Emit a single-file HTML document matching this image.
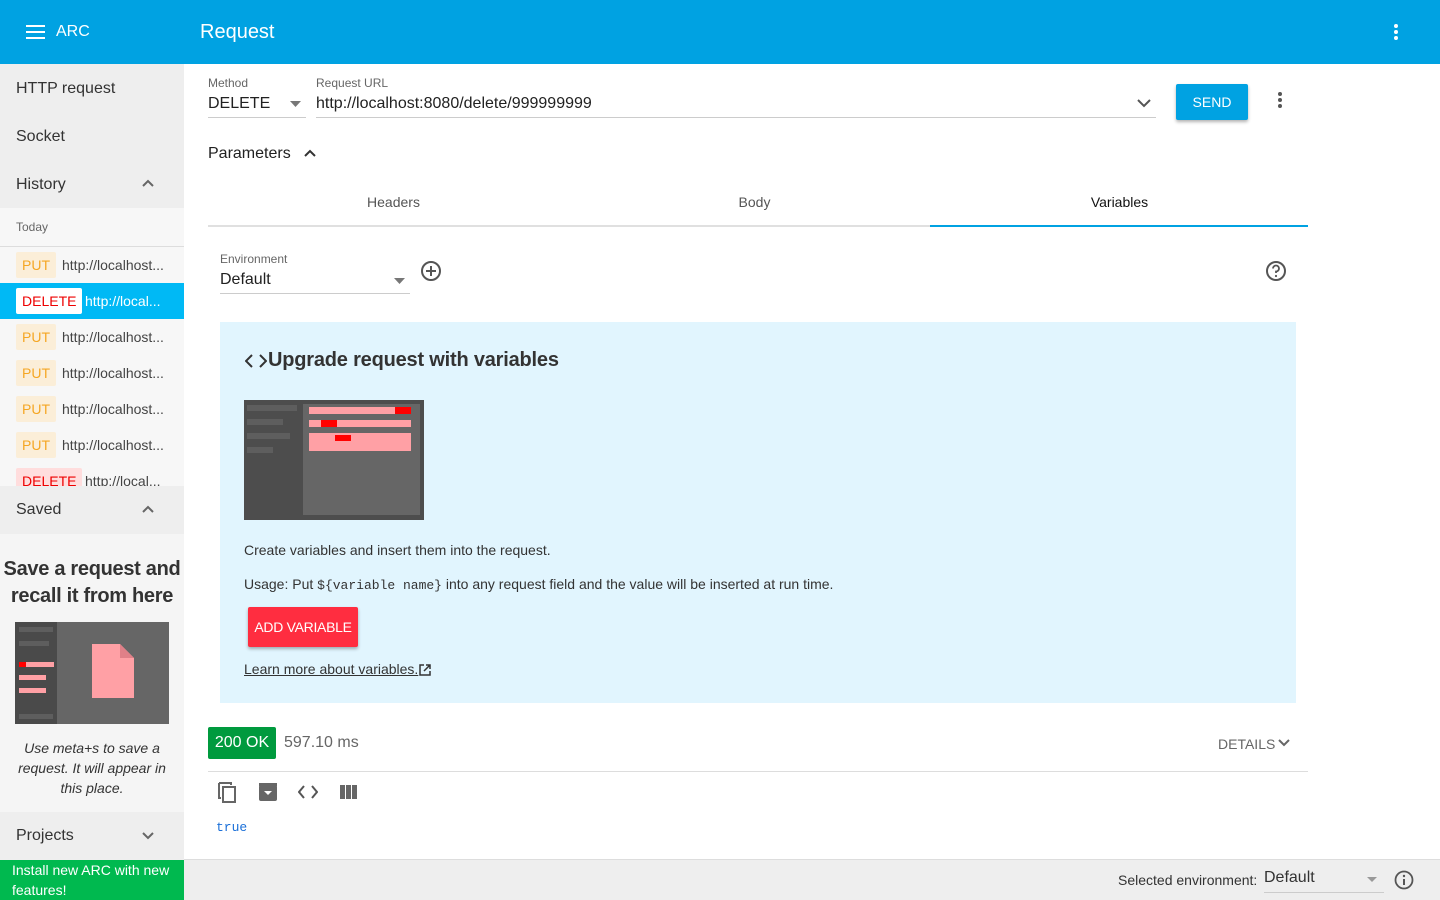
<!DOCTYPE html>
<html><head><meta charset="utf-8"><style>
*{box-sizing:border-box;margin:0;padding:0}
html,body{width:1440px;height:900px;overflow:hidden}
body{font-family:"Liberation Sans",sans-serif;color:#212121;background:#fff;position:relative}
.abs{position:absolute}
.top{left:0;top:0;width:1440px;height:64px;background:#00a2e2;color:#fff}
.side{left:0;top:64px;width:184px;height:836px;background:#f5f5f5;overflow:hidden}
.sh{height:48px;background:#eee;font-size:16px;color:#333;padding-left:16px;line-height:48px;position:relative}
.item{position:absolute;left:0;width:184px;height:36px}
.tag{position:absolute;left:16px;top:5px;height:26px;line-height:26px;padding:0 6px;border-radius:2px;font-size:14px}
.put{background:#fbeed8;color:#f5a623}
.del{background:#fdd;color:#e00}
.url{position:absolute;top:0;line-height:36px;font-size:14px;color:#444}
.lbl{font-size:12px;color:#666}
.tab{position:absolute;top:190px;font-size:14px;color:#555;width:361px;text-align:center;line-height:24px}
</style></head><body>
<div class="abs top">
<svg class="abs" style="left:26px;top:24px" width="20" height="16"><rect y="1" width="19" height="2" fill="#fff"/><rect y="7" width="19" height="2" fill="#fff"/><rect y="13" width="19" height="2" fill="#fff"/></svg>
<div class="abs" style="left:56px;top:23px;font-size:16px">ARC</div>
<div class="abs" style="left:200px;top:21px;font-size:20px">Request</div>
<svg class="abs" style="left:1392px;top:24px" width="8" height="18"><circle cx="4" cy="2" r="2" fill="#fff"/><circle cx="4" cy="8" r="2" fill="#fff"/><circle cx="4" cy="14" r="2" fill="#fff"/></svg>
</div>
<div class="abs side">
<div class="sh" style="line-height:49px">HTTP request</div>
<div class="sh" style="line-height:49px">Socket</div>
<div class="sh" style="line-height:49px">History<svg class="abs" style="left:142px;top:19px" width="12" height="8"><path d="M1 7L6 2L11 7" stroke="#666" stroke-width="2" fill="none"/></svg></div>
<div style="position:relative;height:278px;background:#f7f7f7;overflow:hidden">
<div class="abs" style="left:16px;top:12px;font-size:12px;color:#666">Today</div>
<div class="abs" style="left:0;top:38px;width:184px;height:1px;background:#ddd"></div>
<div class="item" style="top:39px"><span class="tag put">PUT</span><span class="url" style="left:62px">http://localhost...</span></div>
<div class="item" style="top:75px;background:#00b9f5"><span class="tag" style="background:#fff;color:#e00">DELETE</span><span class="url" style="left:85px;color:#fff">http://local...</span></div>
<div class="item" style="top:111px"><span class="tag put">PUT</span><span class="url" style="left:62px">http://localhost...</span></div>
<div class="item" style="top:147px"><span class="tag put">PUT</span><span class="url" style="left:62px">http://localhost...</span></div>
<div class="item" style="top:183px"><span class="tag put">PUT</span><span class="url" style="left:62px">http://localhost...</span></div>
<div class="item" style="top:219px"><span class="tag put">PUT</span><span class="url" style="left:62px">http://localhost...</span></div>
<div class="item" style="top:255px"><span class="tag del">DELETE</span><span class="url" style="left:85px">http://local...</span></div>
</div>
<div class="sh">Saved<svg class="abs" style="left:142px;top:19px" width="12" height="8"><path d="M1 7L6 2L11 7" stroke="#666" stroke-width="2" fill="none"/></svg></div>
<div class="abs" style="left:0;top:492px;width:184px;text-align:center;font-size:20px;line-height:27px;color:#333;font-weight:bold;letter-spacing:-0.3px">Save a request and recall it from here</div>
<svg class="abs" style="left:15px;top:558px" width="154" height="102"><rect width="154" height="102" fill="#666"/><rect width="42" height="102" fill="#4a4a4a"/><rect x="4" y="5" width="34" height="5" fill="#5e5e5e"/><rect x="4" y="19" width="30" height="5" fill="#5e5e5e"/><rect x="4" y="40" width="35" height="5" fill="#ffa0a5"/><rect x="4" y="40" width="7" height="5" fill="#f00"/><rect x="4" y="53" width="27" height="5" fill="#ffa0a5"/><rect x="4" y="66" width="27" height="5" fill="#ffa0a5"/><rect x="4" y="92" width="34" height="5" fill="#5e5e5e"/><path d="M77 22H105L119 36V76H77Z" fill="#ffa0a5"/><path d="M105 22L119 36H105Z" fill="#e08088"/></svg>
<div class="abs" style="left:10px;top:674px;width:164px;text-align:center;font-size:14px;line-height:20px;font-style:italic;color:#333">Use meta+s to save a request. It will appear in this place.</div>
<div class="sh" style="position:absolute;left:0;top:748px;width:184px">Projects<svg class="abs" style="left:142px;top:20px" width="12" height="8"><path d="M1 1L6 6L11 1" stroke="#666" stroke-width="2" fill="none"/></svg></div>
<div class="abs" style="left:0;top:796px;width:184px;height:40px;background:#00b94f;color:#fff;font-size:14px;line-height:20px;padding-left:12px">Install new ARC with new features!</div>
</div>

<div class="abs lbl" style="left:208px;top:76px">Method</div>
<div class="abs" style="left:208px;top:95px;font-size:16px">DELETE</div>
<svg class="abs" style="left:290px;top:101px" width="11" height="6"><path d="M0 0H11L5.5 6Z" fill="#777"/></svg>
<div class="abs" style="left:208px;top:117px;width:98px;height:1px;background:#ccc"></div>
<div class="abs lbl" style="left:316px;top:76px">Request URL</div>
<div class="abs" style="left:316px;top:95px;font-size:16px">http://localhost:8080/delete/999999999</div>
<svg class="abs" style="left:1137px;top:99px" width="14" height="9"><path d="M1 1L7 7L13 1" stroke="#555" stroke-width="2" fill="none"/></svg>
<div class="abs" style="left:316px;top:117px;width:840px;height:1px;background:#ccc"></div>
<div class="abs" style="left:1176px;top:84px;width:72px;height:36px;background:#00a2e2;color:#fff;font-size:14px;line-height:36px;text-align:center;border-radius:2px;box-shadow:0 2px 3px rgba(0,0,0,.3)">SEND</div>
<svg class="abs" style="left:1276px;top:92px" width="8" height="18"><circle cx="4" cy="2" r="2" fill="#555"/><circle cx="4" cy="8" r="2" fill="#555"/><circle cx="4" cy="14" r="2" fill="#555"/></svg>
<div class="abs" style="left:208px;top:145px;font-size:16px">Parameters</div>
<svg class="abs" style="left:304px;top:149px" width="12" height="8"><path d="M1 7L6 2L11 7" stroke="#333" stroke-width="2" fill="none"/></svg>
<div class="tab" style="left:213px">Headers</div>
<div class="tab" style="left:574px">Body</div>
<div class="tab" style="left:939px;color:#111">Variables</div>
<div class="abs" style="left:208px;top:225px;width:1100px;height:2px;background:#e0e0e0"></div>
<div class="abs" style="left:930px;top:225px;width:378px;height:2px;background:#00a2e2"></div>
<div class="abs lbl" style="left:220px;top:252px">Environment</div>
<div class="abs" style="left:220px;top:271px;font-size:16px">Default</div>
<svg class="abs" style="left:394px;top:278px" width="11" height="6"><path d="M0 0H11L5.5 6Z" fill="#777"/></svg>
<div class="abs" style="left:220px;top:293px;width:190px;height:1px;background:#ccc"></div>
<svg class="abs" style="left:420px;top:260px" width="22" height="22"><circle cx="11" cy="11" r="9" stroke="#555" stroke-width="2" fill="none"/><path d="M11 6V16M6 11H16" stroke="#555" stroke-width="2"/></svg>
<svg class="abs" style="left:1265px;top:260px" width="22" height="22"><circle cx="11" cy="11" r="9" stroke="#555" stroke-width="2" fill="none"/><path d="M8 8.5A3 3 0 1 1 11 11.5V13" stroke="#555" stroke-width="1.8" fill="none"/><circle cx="11" cy="16" r="1.1" fill="#555"/></svg>

<div class="abs" style="left:220px;top:322px;width:1076px;height:381px;background:#e1f5fe"></div>
<svg class="abs" style="left:245px;top:354px" width="22" height="14"><path d="M7 1L1 7L7 13M15 1L21 7L15 13" stroke="#333" stroke-width="2" fill="none"/></svg>
<div class="abs" style="left:268px;top:349px;font-size:20px;font-weight:bold;color:#333;letter-spacing:-0.2px">Upgrade request with variables</div>
<svg class="abs" style="left:244px;top:400px" width="180" height="120"><rect width="180" height="120" fill="#4d4d4d"/><rect x="59" y="4" width="117" height="111" fill="#666"/><rect x="3" y="5" width="50" height="6" fill="#5e5e5e"/><rect x="3" y="19" width="36" height="6" fill="#5e5e5e"/><rect x="3" y="33" width="43" height="6" fill="#5e5e5e"/><rect x="3" y="47" width="26" height="6" fill="#5e5e5e"/><rect x="65" y="7" width="102" height="7" fill="#ffa0a5"/><rect x="151" y="7" width="16" height="7" fill="#f00"/><rect x="65" y="20" width="102" height="7" fill="#ffa0a5"/><rect x="77" y="20" width="16" height="7" fill="#f00"/><rect x="65" y="33" width="102" height="18" fill="#ffa0a5"/><rect x="91" y="35" width="16" height="6" fill="#f00"/></svg>
<div class="abs" style="left:244px;top:542px;font-size:14px;color:#333">Create variables and insert them into the request.</div>
<div class="abs" style="left:244px;top:576px;font-size:14px;color:#333">Usage: Put <span style="font-family:'Liberation Mono',monospace;font-size:13px">${variable name}</span> into any request field and the value will be inserted at run time.</div>
<div class="abs" style="left:248px;top:607px;width:110px;height:40px;background:#ff2d40;color:#fff;font-size:14px;line-height:40px;text-align:center;border-radius:2px;box-shadow:0 2px 3px rgba(0,0,0,.3);letter-spacing:-0.3px">ADD VARIABLE</div>
<div class="abs" style="left:244px;top:661px;font-size:14px;color:#333;text-decoration:underline">Learn more about variables.</div>
<svg class="abs" style="left:418px;top:663px" width="14" height="14"><path d="M6 2H2V12H12V8M8 2H12V6M12 2L6 8" stroke="#333" stroke-width="1.5" fill="none"/></svg>

<div class="abs" style="left:208px;top:727px;width:68px;height:32px;background:#009a3e;color:#fff;font-size:16px;line-height:32px;text-align:center;border-radius:2px">200 OK</div>
<div class="abs" style="left:284px;top:734px;font-size:16px;color:#666">597.10 ms</div>
<div class="abs" style="left:1218px;top:736px;font-size:14px;color:#666">DETAILS</div>
<svg class="abs" style="left:1278px;top:739px" width="12" height="8"><path d="M1 1L6 6L11 1" stroke="#666" stroke-width="2" fill="none"/></svg>
<div class="abs" style="left:208px;top:771px;width:1100px;height:1px;background:#ddd"></div>
<svg class="abs" style="left:217px;top:781px" width="22" height="22"><path d="M2 2H14V4M2 2V17H4" stroke="#666" stroke-width="2" fill="none"/><rect x="6" y="6" width="12" height="15" stroke="#666" stroke-width="2" fill="none"/></svg>
<svg class="abs" style="left:259px;top:783px" width="18" height="18"><rect y="2" width="18" height="16" rx="2" fill="#666"/><rect x="0" y="0" width="18" height="3" fill="#666"/><path d="M5 8H13L9 12Z" fill="#fff"/></svg>
<svg class="abs" style="left:298px;top:785px" width="20" height="14"><path d="M6 1L1 7L6 13M14 1L19 7L14 13" stroke="#555" stroke-width="2" fill="none"/></svg>
<svg class="abs" style="left:340px;top:785px" width="18" height="14"><rect width="5" height="14" fill="#666"/><rect x="6" width="5" height="14" fill="#666"/><rect x="12" width="5" height="14" fill="#666"/></svg>
<div class="abs" style="left:216px;top:820px;font-family:'Liberation Mono',monospace;font-size:13px;color:#1a6fd8">true</div>

<div class="abs" style="left:184px;top:859px;width:1256px;height:41px;background:#eee;border-top:1px solid #ddd"></div>
<div class="abs" style="left:1118px;top:872px;font-size:14px;color:#333">Selected environment:</div>
<div class="abs" style="left:1264px;top:869px;font-size:16px;color:#333">Default</div>
<svg class="abs" style="left:1367px;top:877px" width="10" height="5"><path d="M0 0H10L5 5Z" fill="#999"/></svg>
<div class="abs" style="left:1264px;top:892px;width:120px;height:1px;background:#ccc"></div>
<svg class="abs" style="left:1394px;top:870px" width="20" height="20"><circle cx="10" cy="10" r="8.5" stroke="#555" stroke-width="1.8" fill="none"/><rect x="9" y="9" width="2" height="6" fill="#555"/><circle cx="10" cy="6" r="1.2" fill="#555"/></svg>
</body></html>
